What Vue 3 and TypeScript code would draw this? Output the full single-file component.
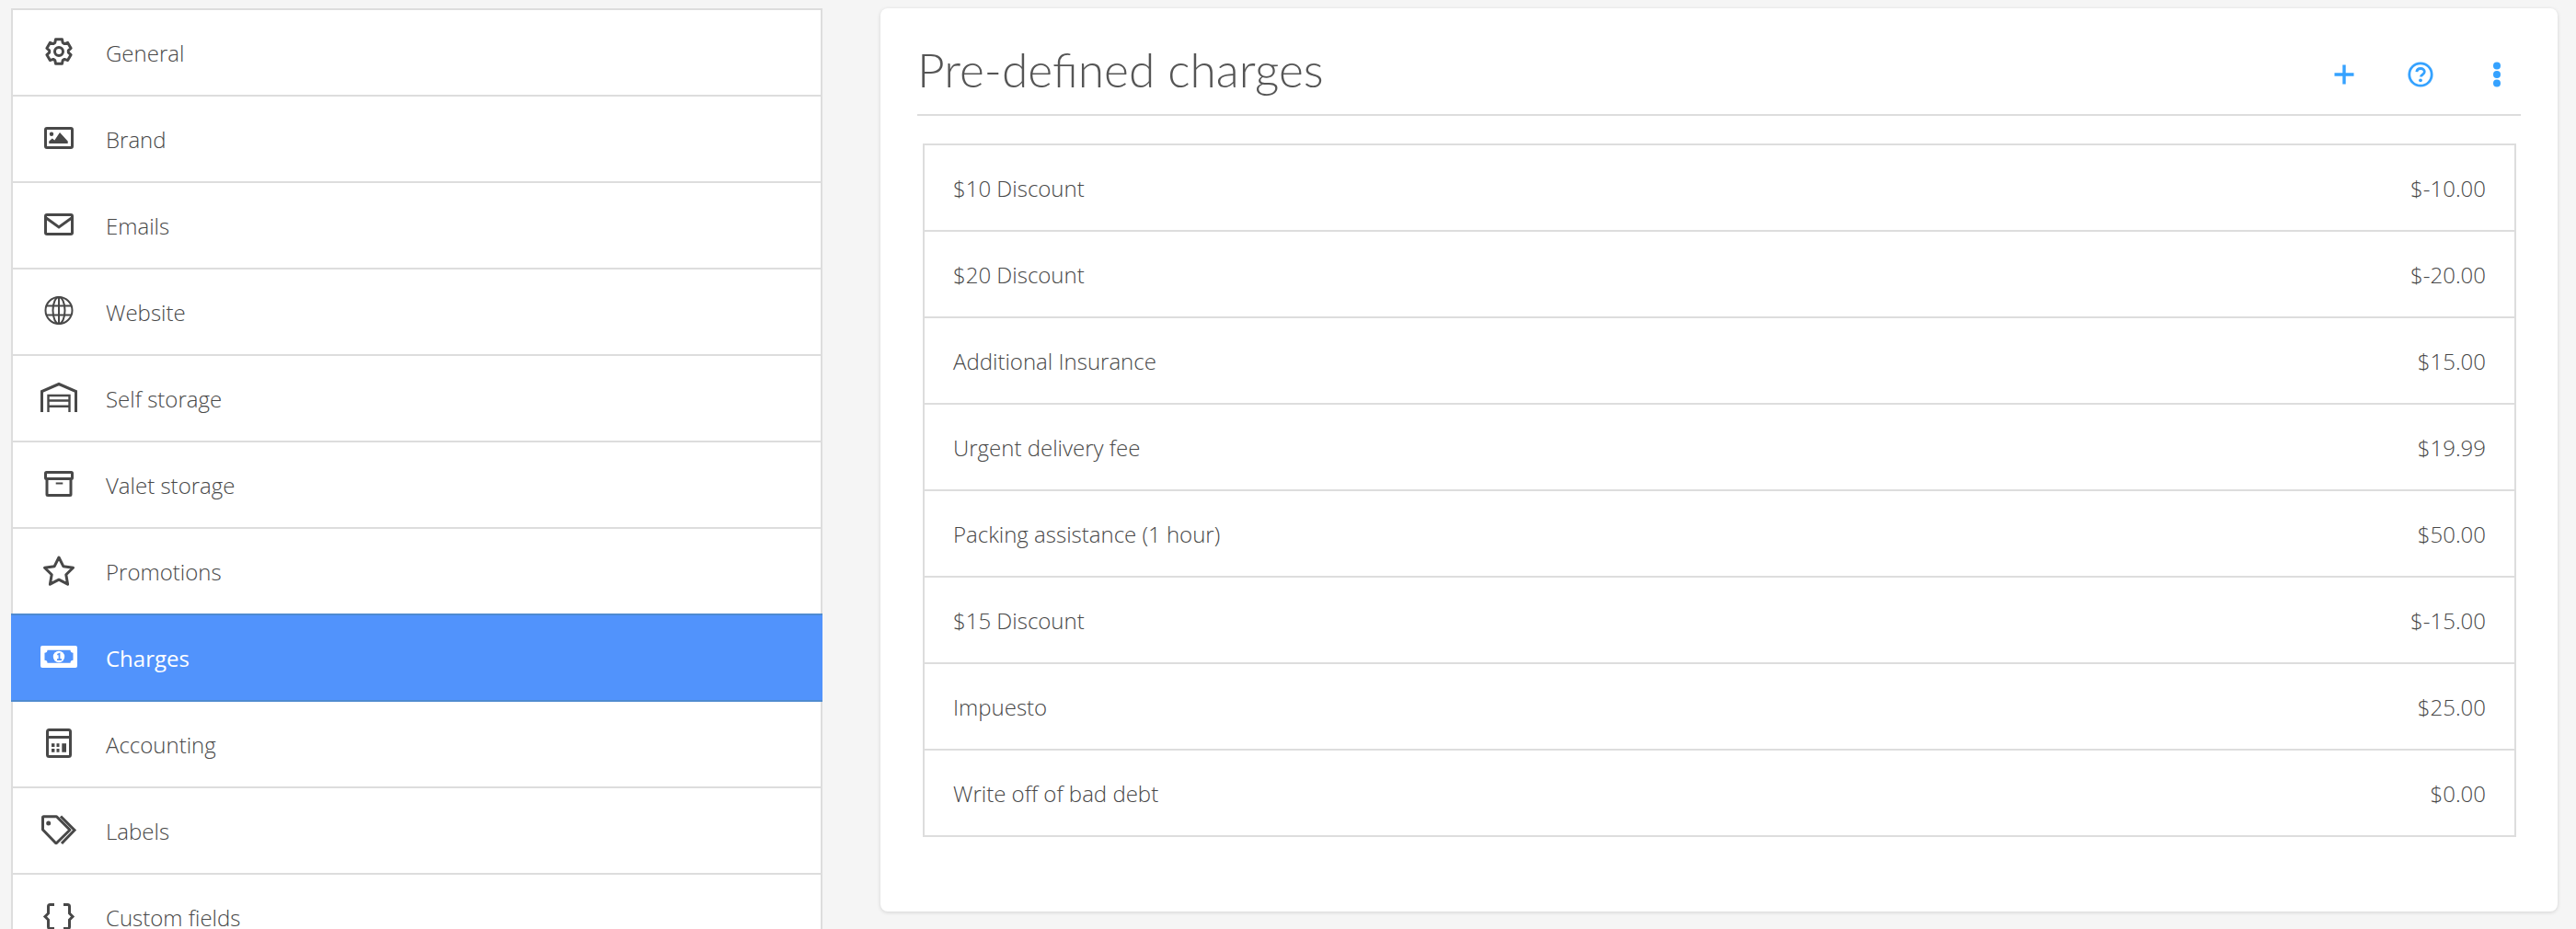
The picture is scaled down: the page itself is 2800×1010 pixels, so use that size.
<template>
  <div class="page">
    <nav class="side-menu">
      <a
        v-for="item in menu"
        :key="item.name"
        class="menu-item"
        :class="{ active: item.name === 'Charges' }"
      >
        <svg class="menu-icon" viewBox="0 0 44 44" v-html="item.icon"></svg>
        <span>{{ item.name }}</span>
      </a>
    </nav>

    <section class="card">
      <header class="card-header">
        <h1>Pre-defined charges</h1>
        <div class="actions">
          <svg viewBox="0 0 30 30"><path d="M15 4.500v21M4.500 15h21" fill="none" stroke="currentColor" stroke-width="3.400" /></svg>
          <svg viewBox="0 0 30 30">
            <circle cx="15" cy="15" r="12.200" fill="none" stroke="currentColor" stroke-width="2.800" />
            <path d="M10.800 12.200c.3-2.400 2-3.700 4.300-3.700 2.500 0 4.200 1.500 4.200 3.500 0 1.600-.9 2.400-2.200 3.200-1 .6-1.600 1.100-1.600 2.200" fill="none" stroke="currentColor" stroke-width="2.800" />
            <circle cx="15" cy="21.300" r="1.900" fill="currentColor" />
          </svg>
          <svg viewBox="0 0 30 30">
            <circle cx="15" cy="5.500" r="4" fill="currentColor" />
            <circle cx="15" cy="15" r="4" fill="currentColor" />
            <circle cx="15" cy="24.500" r="4" fill="currentColor" />
          </svg>
        </div>
      </header>

      <div class="charges">
        <div v-for="charge in charges" :key="charge.name" class="charge-row">
          <span>{{ charge.name }}</span>
          <span>{{ charge.amount }}</span>
        </div>
      </div>
    </section>
  </div>
</template>

<script setup lang="ts">
interface MenuItem {
  name: string
  icon: string
}

interface Charge {
  name: string
  amount: string
}

// 6-toothed cog outline with a tooth on top, centred in the icon box
const gearPath = (): string => {
  const cx = 22
  const cy = 21
  const parts: string[] = []
  for (let i = 0; i < 6; i++) {
    const a = (i * Math.PI) / 3 - Math.PI / 2
    const pts: [number, number][] = [
      [a - 0.42, 10.4],
      [a - 0.26, 13.6],
      [a + 0.26, 13.6],
      [a + 0.42, 10.4],
    ]
    pts.forEach(([t, r]) => {
      const x = (cx + r * Math.cos(t)).toFixed(2)
      const y = (cy + r * Math.sin(t)).toFixed(2)
      parts.push(`${parts.length ? 'L' : 'M'}${x} ${y}`)
    })
  }
  return parts.join(' ') + ' Z'
}

const line = 'fill="none" stroke="currentColor" stroke-width="3"'
const thin = 'fill="none" stroke="currentColor" stroke-width="2"'

const menu: MenuItem[] = [
  {
    name: 'General',
    icon: `<path d="${gearPath()}" ${line} stroke-linejoin="round" /><circle cx="22" cy="21" r="4.500" ${line} />`,
  },
  {
    name: 'Brand',
    icon: `<rect x="7.500" y="10.500" width="29" height="21" rx="1.500" ${line} /><circle cx="14" cy="16.700" r="2.200" fill="currentColor" /><path d="M11.300 27v-2.500l3.500-3 2.500 2 5.700-8.500 8.700 9.500V27z" fill="currentColor" />`,
  },
  {
    name: 'Emails',
    icon: `<rect x="7.500" y="10.500" width="29" height="21" rx="1.500" ${line} /><path d="M7.500 13.500 22 24l14.500-10.500" ${line} />`,
  },
  {
    name: 'Website',
    icon: `<circle cx="22" cy="20.500" r="14.500" ${thin} /><ellipse cx="22" cy="20.500" rx="6.500" ry="14.500" ${thin} /><path d="M22 6v29M9 15.500h26M9 25.500h26" ${thin} />`,
  },
  {
    name: 'Self storage',
    icon: `<path d="M3.500 37V14.500L22 6.500l18.500 8V37" ${line} /><path d="M10.500 37V19h23v18M10.500 24.500h23M10.500 30.700h23" fill="none" stroke="currentColor" stroke-width="2.400" />`,
  },
  {
    name: 'Valet storage',
    icon: `<rect x="7.500" y="8.500" width="29" height="7" rx="1" ${line} /><path d="M9 15.500V32.500a1 1 0 0 0 1 1h24a1 1 0 0 0 1-1V15.500" ${line} /><path d="M18.700 20.500h7.600" ${thin} />`,
  },
  {
    name: 'Promotions',
    icon: `<path d="M22 7l4.800 9.700 10.700 1.500-7.700 7.500 1.800 10.500L22 31.200l-9.600 5 1.800-10.500-7.700-7.500 10.700-1.500z" ${line} stroke-linejoin="round" />`,
  },
  {
    name: 'Charges',
    icon: `<rect x="2" y="9" width="40" height="24" rx="2" fill="currentColor" /><path d="M9.500 13.700h25a3 3 0 0 0 3 3v8a3 3 0 0 0-3 3h-25a3 3 0 0 0-3-3v-8a3 3 0 0 0 3-3z" fill="#5193fc" /><circle cx="22" cy="21" r="6.200" fill="currentColor" /><path d="M20.300 18.800l2.200-1v6.200M20 24.200h5" fill="none" stroke="#5193fc" stroke-width="1.800" />`,
  },
  {
    name: 'Accounting',
    icon: `<rect x="9.500" y="6.500" width="25" height="29" rx="2" ${line} /><path d="M9.500 14.500h25" ${line} /><path d="M14 21.300h3.400V25H14zM19.500 21.300h3v3.700h-3zM14 27h3.400v3.700H14zM19.500 27h3v3.700h-3zM25.300 21.300H30v9.400h-4.700z" fill="currentColor" />`,
  },
  {
    name: 'Labels',
    icon: `<path d="M5.500 6.700h14l14.500 14.500L19.500 35.500a1 1 0 0 1-1 0L4.500 21V7.700a1 1 0 0 1 1-1z" ${line} stroke-linejoin="round" /><circle cx="10.700" cy="14" r="2.500" fill="currentColor" /><path d="M24 6.500l15 15-14 14.500" ${line} />`,
  },
  {
    name: 'Custom fields',
    icon: `<path d="M17 8.500h-4.500a2 2 0 0 0-2 2V18L7 21.500l3.500 3.500v7.500a2 2 0 0 0 2 2H17" ${line} /><path d="M27 8.500h4.500a2 2 0 0 1 2 2V18l3.500 3.500-3.500 3.500v7.500a2 2 0 0 1-2 2H27" ${line} />`,
  },
]

const charges: Charge[] = [
  { name: '$10 Discount', amount: '$-10.00' },
  { name: '$20 Discount', amount: '$-20.00' },
  { name: 'Additional Insurance', amount: '$15.00' },
  { name: 'Urgent delivery fee', amount: '$19.99' },
  { name: 'Packing assistance (1 hour)', amount: '$50.00' },
  { name: '$15 Discount', amount: '$-15.00' },
  { name: 'Impuesto', amount: '$25.00' },
  { name: 'Write off of bad debt', amount: '$0.00' },
]
</script>

<style>
html,
body {
  height: 100%;
  overflow: hidden;
  background: #f5f5f5;
}
</style>

<style scoped>
.page {
  display: flex;
  align-items: flex-start;
  gap: 63px;
  padding: 9px 20px 0 12px;
  font-family: 'Open Sans', 'Liberation Sans', sans-serif;
  font-weight: 300;
  font-size: 24px;
  color: #484848;
}

.side-menu {
  flex: 0 0 882px;
  box-sizing: border-box;
  display: flex;
  flex-direction: column;
  border: 2px solid #ddd;
  border-bottom: none;
  background: #fff;
}

.menu-item {
  display: flex;
  align-items: center;
  box-sizing: border-box;
  height: 94px;
  padding-left: 28px;
  border-bottom: 2px solid #ddd;
}

.menu-item span {
  margin-left: 29px;
}

.menu-item.active {
  height: 96px;
  margin: -2px -2px 0;
  padding-left: 30px;
  background: #5193fc;
  border-top: 2px solid #4f8bd0;
  border-bottom: 2px solid #4f8bd0;
  color: #fff;
  font-weight: 400;
}

.menu-icon {
  width: 44px;
  height: 44px;
  flex: none;
}

.card {
  flex: 1;
  height: 982px;
  padding: 0 40px;
  box-sizing: border-box;
  background: #fff;
  border-radius: 8px;
  box-shadow: 0 1px 4px rgba(0, 0, 0, 0.14);
}

.card-header {
  display: flex;
  align-items: center;
  justify-content: space-between;
  box-sizing: border-box;
  height: 117px;
  padding: 28px 11px 0 0;
  border-bottom: 2px solid #ddd;
}

.card-header h1 {
  margin: -12px 0 0;
  font-family: Lato, 'Open Sans', sans-serif;
  font-weight: 300;
  font-size: 51.500px;
  line-height: 60px;
  color: #555;
}

.actions {
  display: flex;
  gap: 53px;
  color: #35a2ff;
}

.actions svg {
  width: 30px;
  height: 30px;
}

.charges {
  margin: 30px 5px 0 6px;
  border: 2px solid #ddd;
  border-bottom: none;
}

.charge-row {
  display: flex;
  align-items: center;
  justify-content: space-between;
  box-sizing: border-box;
  height: 94px;
  padding: 0 31px;
  border-bottom: 2px solid #ddd;
}
</style>
